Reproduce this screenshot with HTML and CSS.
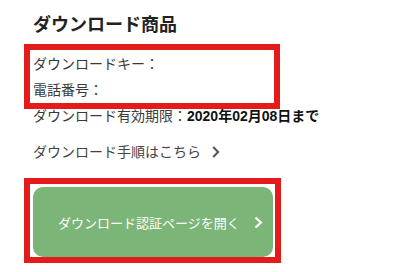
FILE: index.html
```html
<!DOCTYPE html>
<html lang="ja">
  <head>
    <meta charset="UTF-8" />
    <meta name="viewport" content="width=device-width, initial-scale=1.0" />
    <title>ダウンロード商品</title>
    <link rel="stylesheet" href="styles.css">
  </head>

  <body>
    <div class="download-section">
      <h2 class="section-title">ダウンロード商品</h2>

      <div class="key-info">
        <p class="info-line">ダウンロードキー：</p>
        <p class="info-line">電話番号：</p>
        <div class="mark-box mark-box-info"></div>
      </div>

      <p class="info-line">
        ダウンロード有効期限：<span class="expire-date">2020年02月08日まで</span>
      </p>

      <a class="guide-link" href="#">
        ダウンロード手順はこちら
        <svg class="guide-arrow" width="8" height="12" viewBox="0 0 8 12">
          <path d="M1.2 1 L6.2 6 L1.2 11" fill="none" stroke="#555" stroke-width="2" />
        </svg>
      </a>

      <div class="button-wrap">
        <a class="auth-button" href="#">
          <span>ダウンロード認証ページを開く</span>
          <svg class="auth-arrow" width="9" height="13" viewBox="0 0 9 13">
            <path d="M1.5 1.5 L7 6.5 L1.5 11.5" fill="none" stroke="white" stroke-width="2.2" />
          </svg>
        </a>
        <div class="mark-box mark-box-button"></div>
      </div>
    </div>
  </body>
</html>
```

FILE: styles.css
```css
body {
  margin: 0;
  min-height: 272px;
  background-color: white;
  font-family: "Liberation Sans", "Noto Sans CJK JP", sans-serif;
  color: #333;
}

.download-section {
  padding: 14px 0 15px 33px;
}

.section-title {
  margin: 0;
  font-size: 18px;
  line-height: 22px;
  font-weight: bold;
  color: #222;
}

.key-info {
  position: relative;
  margin-top: 15px;
}

.info-line {
  margin: 0;
  font-size: 14px;
  line-height: 26px;
  color: #3a3a3a;
}

.expire-date {
  font-weight: bold;
  color: #111;
}

.guide-link {
  display: flex;
  align-items: center;
  gap: 11px;
  margin-top: 10px;
  font-size: 14px;
  line-height: 26px;
  color: #444;
  text-decoration: none;
}

.button-wrap {
  position: relative;
  margin-top: 22px;
  width: 240px;
}

.auth-button {
  display: flex;
  align-items: center;
  justify-content: space-between;
  height: 70px;
  padding: 0 10px 0 25px;
  box-sizing: border-box;
  background-color: #7bb577;
  border-radius: 10px;
  color: white;
  font-size: 13px;
  text-decoration: none;
}

/* red annotation frames drawn over the content */
.mark-box {
  position: absolute;
  box-sizing: border-box;
  border: 6px solid #e31b1b;
  pointer-events: none;
}

.mark-box-info {
  left: -9px;
  top: -7px;
  width: 256px;
  height: 65px;
}

.mark-box-button {
  left: -9px;
  top: -9px;
  width: 257px;
  height: 85px;
}
```
